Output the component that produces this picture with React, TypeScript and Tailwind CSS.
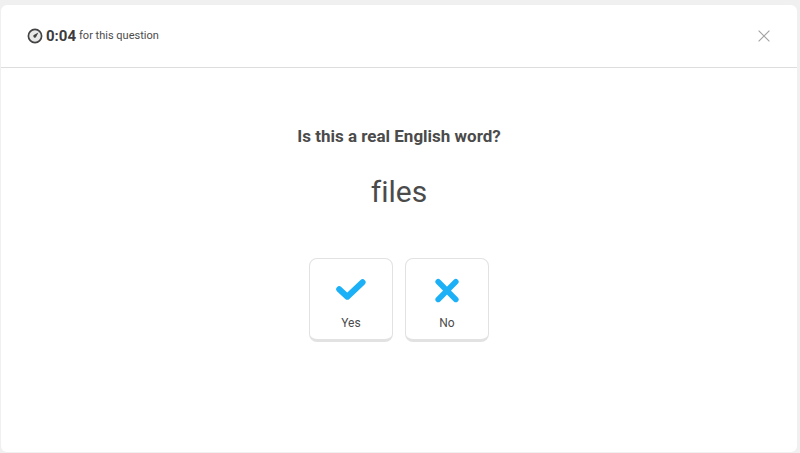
import type { ReactNode } from 'react'

function Stopwatch() {
  return (
    <svg width="16" height="16" viewBox="0 0 16 16" fill="none" aria-hidden="true">
      <circle cx="8" cy="8" r="6.6" fill="#e8e8e8" stroke="#434343" strokeWidth="1.7" />
      <path d="M11.4 4.6 9.2 8.8A1.5 1.5 0 1 1 7.2 6.8Z" fill="#434343" />
    </svg>
  )
}

function CloseIcon() {
  return (
    <svg width="12" height="12" viewBox="0 0 12 12" fill="none" aria-hidden="true">
      <path d="M.6.6 11.4 11.4M11.4.6.6 11.4" stroke="#a3a3a3" strokeWidth="1.2" />
    </svg>
  )
}

function CheckIcon() {
  return (
    <svg width="30" height="26" viewBox="0 0 30 26" fill="none" aria-hidden="true">
      <path
        d="M3.2 12.2 11.3 19.7 26.6 5.3"
        stroke="#1cb0f6"
        strokeWidth="6"
        strokeLinecap="round"
        strokeLinejoin="round"
      />
    </svg>
  )
}

function CrossIcon() {
  return (
    <svg width="30" height="26" viewBox="0 0 30 26" fill="none" aria-hidden="true">
      <path
        d="M6.2 4.8 23.8 22.4M23.8 4.8 6.2 22.4"
        stroke="#1cb0f6"
        strokeWidth="5.6"
        strokeLinecap="round"
      />
    </svg>
  )
}

function Choice({ label, children }: { label: string; children: ReactNode }) {
  return (
    <button
      type="button"
      className="flex w-21 cursor-pointer flex-col items-center gap-3 rounded-lg border border-b-3 border-[#e2e2e2] bg-white pt-[18px] pb-2 hover:bg-gray-50"
    >
      {children}
      <span className="text-xs leading-4">{label}</span>
    </button>
  )
}

export default function App() {
  return (
    <div className="flex min-h-screen flex-col bg-[#f0f0f0] pt-[5px] pr-[3px] pb-px pl-px font-['Roboto',sans-serif] text-[#4b4b4b] [font-variant-ligatures:none]">
      <div className="flex flex-1 flex-col rounded-md bg-white">
        <header className="flex items-center justify-between border-b border-[#dddddd] py-[21px] pr-[27px] pl-[26px]">
          <div className="flex items-center gap-[3px]">
            <Stopwatch />
            <p className="flex items-center gap-[3px] leading-5">
              <span className="text-[15px] font-bold text-[#3c3c3c]">0:04</span>
              <span className="text-[11px]">for this question</span>
            </p>
          </div>
          <button type="button" aria-label="Close" className="cursor-pointer">
            <CloseIcon />
          </button>
        </header>

        <main className="flex flex-col items-center pt-14">
          <h1 className="text-[17px] leading-6 font-bold">Is this a real English word?</h1>
          <p className="mt-6 text-[30px] leading-10">files</p>
          <div className="mt-[46px] flex gap-3">
            <Choice label="Yes">
              <CheckIcon />
            </Choice>
            <Choice label="No">
              <CrossIcon />
            </Choice>
          </div>
        </main>
      </div>
    </div>
  )
}
